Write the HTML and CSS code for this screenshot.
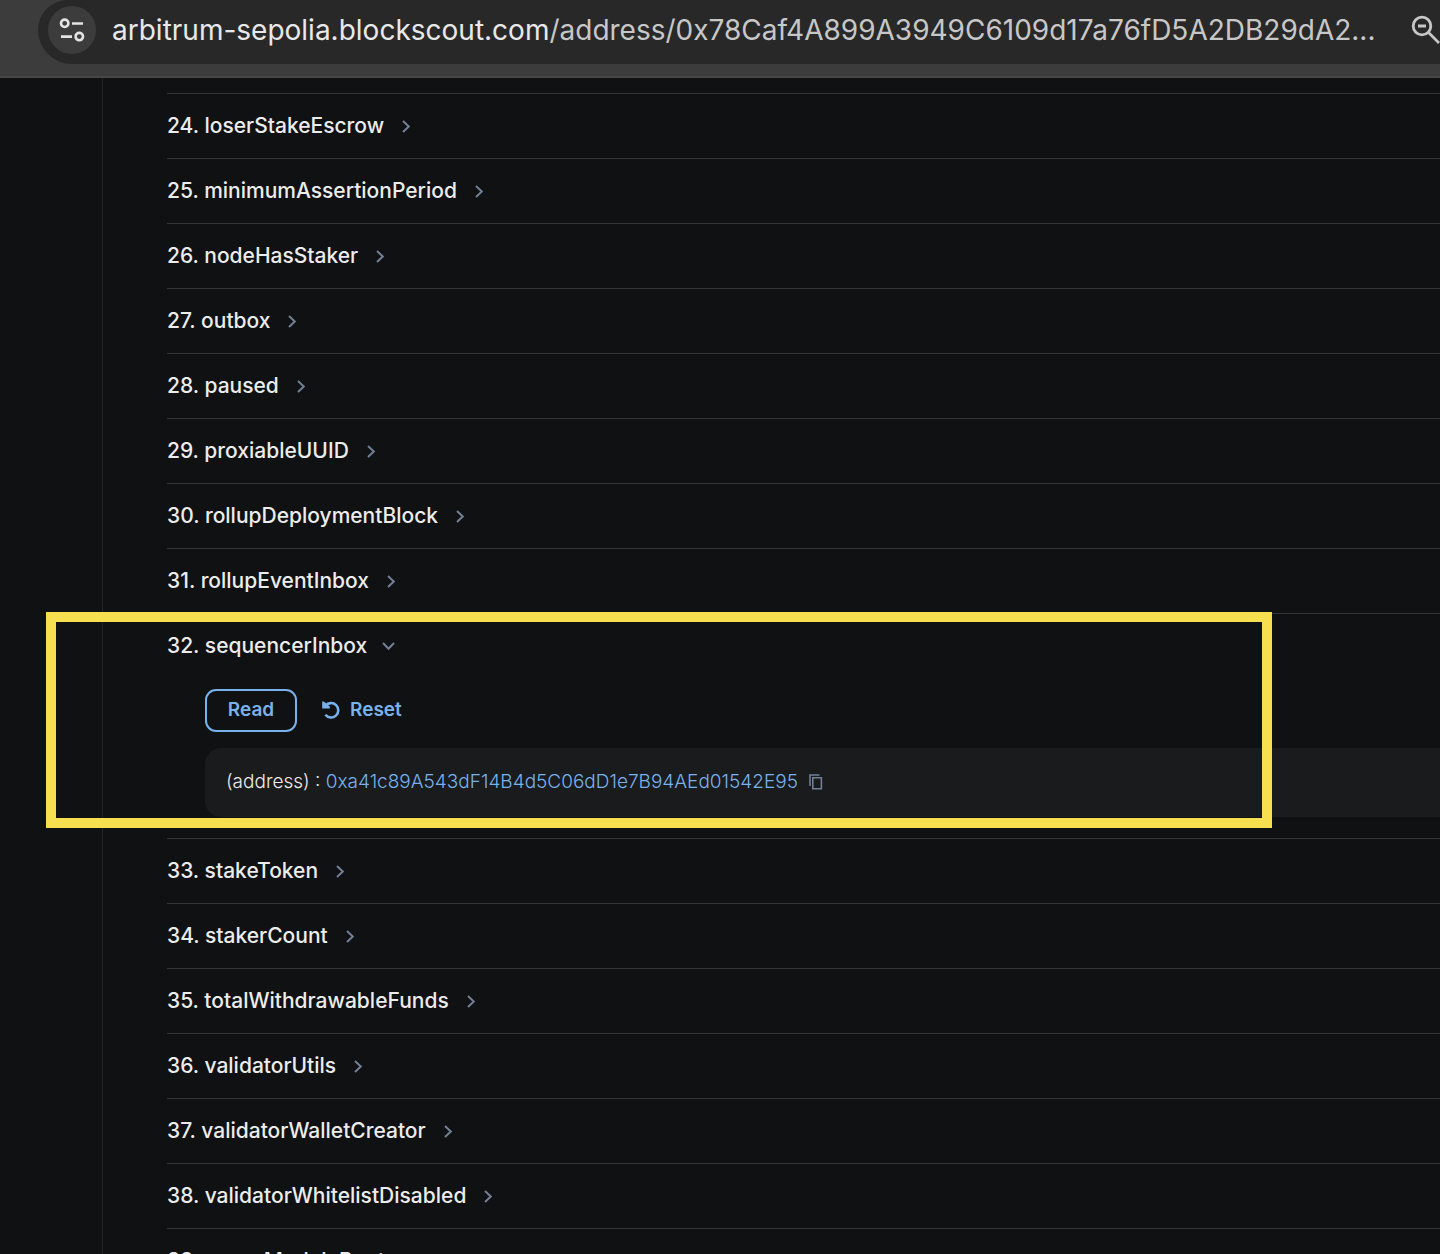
FILE: index.html
```html
<!DOCTYPE html>
<html lang="en">
<head>
<meta charset="utf-8">
<title>Contract methods</title>
<link rel="stylesheet" href="styles.css">
</head>
<body>
<svg class="sprite" aria-hidden="true">
  <symbol id="chevron" viewBox="0 0 16 16"><path d="M5 3 10.8 8.5 5 14" fill="none" stroke="currentColor" stroke-width="2"/></symbol>
</svg>
<header class="toolbar">
  <div class="omnibox">
    <button class="site-info" aria-label="Site information">
      <svg width="28" height="28" viewBox="0 0 28 28" fill="none" stroke="currentColor" stroke-width="2.6">
        <circle cx="6.7" cy="7.3" r="3.7"/><path d="M14 7.5h11M3 20.6h11"/><circle cx="21.3" cy="20.6" r="3.7"/>
      </svg>
    </button>
    <div class="url"><span class="domain">arbitrum-sepolia.blockscout.com</span>/address/0x78Caf4A899A3949C6109d17a76fD5A2DB29dA2...</div>
    <button class="zoom-button" aria-label="Zoom out">
      <svg width="32" height="32" viewBox="0 0 32 32" fill="none" stroke="currentColor" stroke-width="2.8">
        <circle cx="14" cy="12" r="8.8"/><path d="M10 12h8M20.5 18.5 31 29"/>
      </svg>
    </button>
  </div>
</header>
<main class="page">
  <ol class="methods">
    <li class="method"><button class="title">24. loserStakeEscrow<svg class="chevron"><use href="#chevron"/></svg></button></li>
    <li class="method"><button class="title">25. minimumAssertionPeriod<svg class="chevron"><use href="#chevron"/></svg></button></li>
    <li class="method"><button class="title">26. nodeHasStaker<svg class="chevron"><use href="#chevron"/></svg></button></li>
    <li class="method"><button class="title">27. outbox<svg class="chevron"><use href="#chevron"/></svg></button></li>
    <li class="method"><button class="title">28. paused<svg class="chevron"><use href="#chevron"/></svg></button></li>
    <li class="method"><button class="title">29. proxiableUUID<svg class="chevron"><use href="#chevron"/></svg></button></li>
    <li class="method"><button class="title">30. rollupDeploymentBlock<svg class="chevron"><use href="#chevron"/></svg></button></li>
    <li class="method"><button class="title">31. rollupEventInbox<svg class="chevron"><use href="#chevron"/></svg></button></li>
    <li class="method open">
      <button class="title" aria-expanded="true">32. sequencerInbox<svg class="chevron"><use href="#chevron"/></svg></button>
      <div class="details">
        <div class="actions">
          <button class="read">Read</button>
          <button class="reset">
            <svg width="20" height="20" viewBox="0 0 20 20" fill="none" stroke="currentColor" stroke-width="2.6"><path d="M4.6 5.6A7.2 7.2 0 1 1 4.4 14.7"/><path d="M1.2 1.6H2.8L8.8 6.6V8.6H1.2z" fill="currentColor" stroke="none"/></svg>
            Reset
          </button>
        </div>
        <div class="result">
          <span>(address) : <a href="#">0xa41c89A543dF14B4d5C06dD1e7B94AEd01542E95</a></span>
          <button class="copy" aria-label="Copy address">
            <svg width="14" height="16" viewBox="0 0 14 16" fill="none" stroke="currentColor" stroke-width="1.6"><path d="M3.8 3.8h8.6v11H3.8zM1 12V1h9.5"/></svg>
          </button>
        </div>
      </div>
      <div class="highlight"></div>
    </li>
    <li class="method"><button class="title">33. stakeToken<svg class="chevron"><use href="#chevron"/></svg></button></li>
    <li class="method"><button class="title">34. stakerCount<svg class="chevron"><use href="#chevron"/></svg></button></li>
    <li class="method"><button class="title">35. totalWithdrawableFunds<svg class="chevron"><use href="#chevron"/></svg></button></li>
    <li class="method"><button class="title">36. validatorUtils<svg class="chevron"><use href="#chevron"/></svg></button></li>
    <li class="method"><button class="title">37. validatorWalletCreator<svg class="chevron"><use href="#chevron"/></svg></button></li>
    <li class="method"><button class="title">38. validatorWhitelistDisabled<svg class="chevron"><use href="#chevron"/></svg></button></li>
    <li class="method"><button class="title">39. wasmModuleRoot<svg class="chevron"><use href="#chevron"/></svg></button></li>
  </ol>
</main>
</body>
</html>
```
FILE: styles.css
```css
* { box-sizing: border-box; }
body {
  margin: 0;
  height: 100vh;
  overflow: hidden;
  display: flex;
  flex-direction: column;
  background: #101112;
  color: #ececec;
  font-family: Inter, "Liberation Sans", sans-serif;
}
button {
  margin: 0;
  padding: 0;
  border: 0;
  background: none;
  color: inherit;
  font: inherit;
  cursor: pointer;
}
svg { display: block; flex: none; }
.sprite { width: 0; height: 0; position: absolute; }

.toolbar {
  flex: none;
  padding: 0 0 12px 38px;
  background: #3c3c3c;
  border-bottom: 2px solid #474747;
}
.omnibox {
  display: flex;
  align-items: center;
  height: 64px;
  padding: 0 0 4px 10px;
  background: #282828;
  border-radius: 30px 0 0 34px;
}
.site-info {
  display: grid;
  place-items: center;
  flex: none;
  width: 48px;
  height: 48px;
  border-radius: 50%;
  background: #3c3c3c;
  color: #e3e3e3;
}
.url {
  flex: 1;
  min-width: 0;
  margin-left: 16px;
  overflow: hidden;
  white-space: nowrap;
  font-size: 28px;
  line-height: 40px;
  color: #c7c7c7;
}
.domain { color: #e8e8e8; }
.zoom-button { flex: none; width: 32px; color: #c7c7c7; }

.page {
  flex: 1;
  min-height: 0;
  margin-left: 102px;
  padding: 15px 0 0 64px;
  border-left: 1px solid #222425;
}
.methods { margin: 0; padding: 0; list-style: none; }
.method { position: relative; border-top: 1px solid #343637; }
.title {
  display: flex;
  align-items: center;
  gap: 14px;
  height: 64px;
  font-size: 21px;
  font-weight: 500;
  line-height: 32px;
}
.chevron { width: 16px; height: 16px; color: #718096; }
.open .chevron { transform: rotate(90deg); }
.details { padding: 11px 0 21px 38px; }
.actions { display: flex; gap: 24px; margin-bottom: 16px; }
.read, .reset {
  height: 43px;
  padding-bottom: 2px;
  font-size: 19px;
  font-weight: 600;
  line-height: 24px;
  color: #78b2ec;
}
.read { width: 92px; border: 2px solid #78b2ec; border-radius: 11px; }
.reset { display: flex; align-items: center; gap: 9px; }
.result {
  display: flex;
  align-items: center;
  gap: 11px;
  height: 69px;
  padding: 0 21px 2px;
  border-radius: 16px 0 0 16px;
  background: #1a1b1c;
  font-size: 19px;
  font-weight: 300;
  line-height: 28px;
}
.result a { color: #78b2ec; text-decoration: none; }
.copy { color: #718096; }
.highlight {
  position: absolute;
  top: -2px;
  bottom: 10px;
  left: -121px;
  right: 168px;
  border: 10px solid #f6e04f;
  pointer-events: none;
}
```
